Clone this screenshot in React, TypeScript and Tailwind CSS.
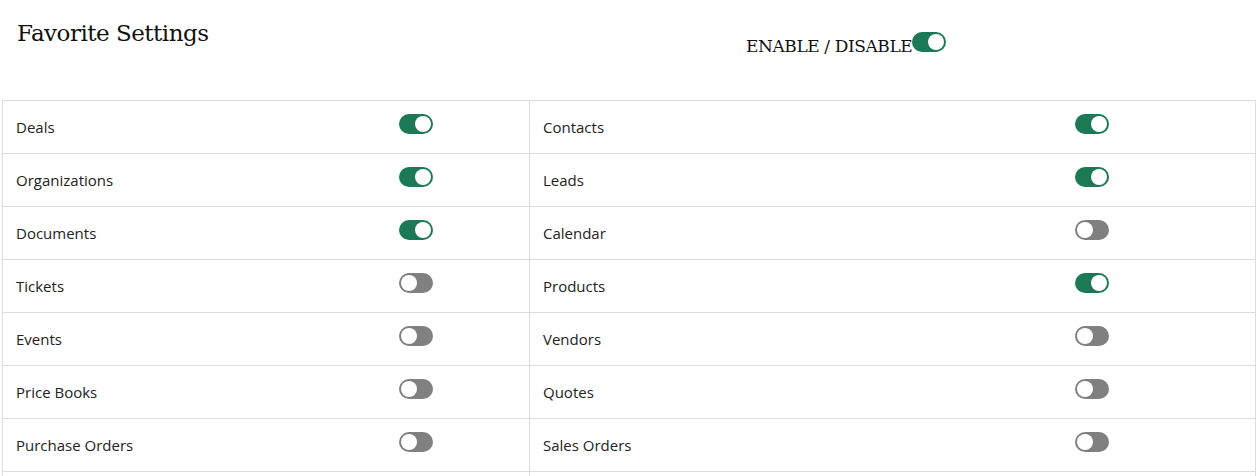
import React, { useState } from "react";

const modules: [string, boolean, string, boolean][] = [
  ["Deals", true, "Contacts", true],
  ["Organizations", true, "Leads", true],
  ["Documents", true, "Calendar", false],
  ["Tickets", false, "Products", true],
  ["Events", false, "Vendors", false],
  ["Price Books", false, "Quotes", false],
  ["Purchase Orders", false, "Sales Orders", false],
];

const Toggle = ({ on, onClick }: { on: boolean; onClick: () => void }) => (
  <button
    onClick={onClick}
    className={
      "flex h-5 w-[34px] items-center rounded-full p-[2px] " +
      (on ? "justify-end bg-[#1b7a55]" : "justify-start bg-[#808080]")
    }
  >
    <span className="block h-4 w-4 rounded-full bg-white" />
  </button>
);

export default function App() {
  const [all, setAll] = useState(true);
  const [state, setState] = useState(modules);

  const flip = (i: number, side: 1 | 3) => {
    setState((s) =>
      s.map((r, j) => {
        if (j !== i) return r;
        const n = [...r] as typeof r;
        n[side] = !n[side];
        return n;
      })
    );
  };

  return (
    <div className="h-[476px] overflow-hidden bg-white pl-[2px] pr-[4px] text-[#222]">
      <div className="grid h-[100px] grid-cols-[744px_1fr]">
        <h1 className="pl-[15px] pt-[18px] text-[23px] leading-[31px] text-[#111] font-['DejaVu_Serif',serif] tracking-[-0.5px]">
          Favorite Settings
        </h1>
        <div className="flex items-start pt-[32px]">
          <span className="mt-[3px] text-[17px] leading-[22px] text-[#111] font-['DejaVu_Serif',serif] tracking-[-0.4px]">
            ENABLE / DISABLE
          </span>
          <Toggle on={all} onClick={() => setAll(!all)} />
        </div>
      </div>
      <div className="border-l border-t border-[#dcdcdc] font-['Open_Sans',sans-serif] text-[15px]">
        {state.map((r, i) => (
          <div
            key={r[0]}
            className="grid h-[53px] grid-cols-[396px_131px_545px_1fr] border-b border-[#dcdcdc]"
          >
            <div className="flex items-center pl-[13px]">{r[0]}</div>
            <div className="flex items-center border-r border-[#dcdcdc] pb-[6px]">
              <Toggle on={r[1]} onClick={() => flip(i, 1)} />
            </div>
            <div className="flex items-center pl-[13px]">{r[2]}</div>
            <div className="flex items-center border-r border-[#dcdcdc] pb-[6px]">
              <Toggle on={r[3]} onClick={() => flip(i, 3)} />
            </div>
          </div>
        ))}
        <div className="grid h-[53px] grid-cols-[396px_131px_545px_1fr]">
          <div />
          <div className="border-r border-[#dcdcdc]" />
          <div />
          <div className="border-r border-[#dcdcdc]" />
        </div>
      </div>
    </div>
  );
}
